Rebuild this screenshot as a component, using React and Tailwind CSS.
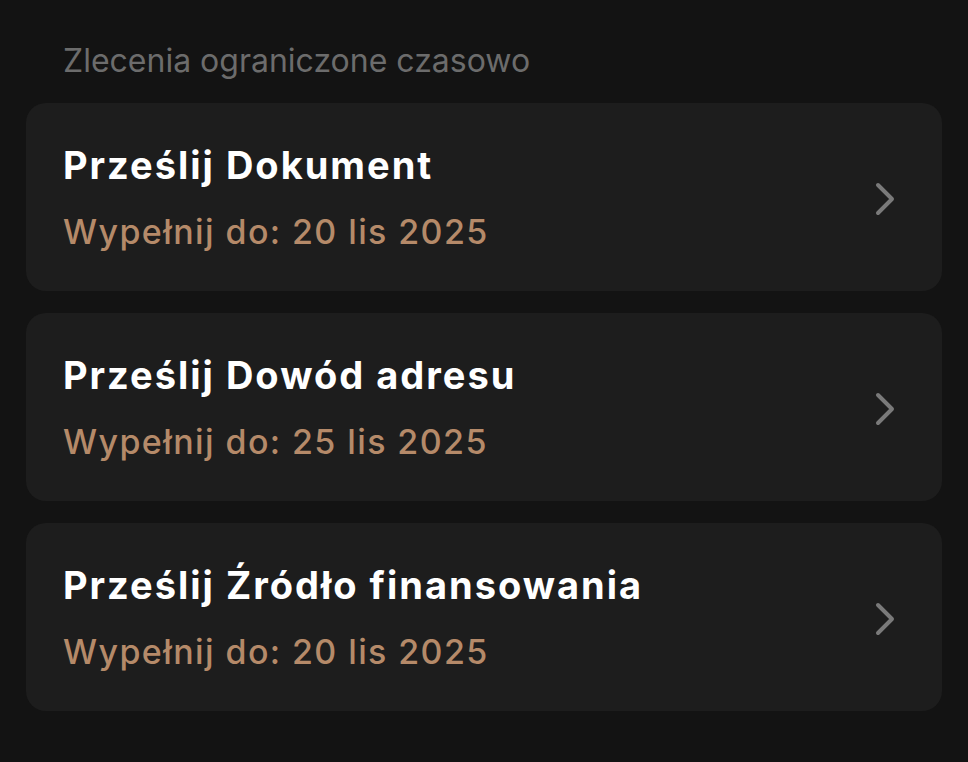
const tasks = [
  { title: 'Prześlij Dokument', due: '20 lis 2025' },
  { title: 'Prześlij Dowód adresu', due: '25 lis 2025' },
  { title: 'Prześlij Źródło finansowania', due: '20 lis 2025' },
];

function Chevron() {
  return (
    <svg width="24" height="40" viewBox="0 0 24 40" fill="none" className="mt-[4px] shrink-0">
      <path d="M5 6 L19 20 L5 34" stroke="#7a7a7a" strokeWidth="4" strokeLinecap="round" strokeLinejoin="round" />
    </svg>
  );
}

export default function App() {
  return (
    <div
      className="min-h-screen bg-[#131313] px-[26px] pt-[41px]"
      style={{ fontFamily: 'Inter, "Noto Sans", sans-serif' }}
    >
      <h2 className="px-[37px] text-[32px] leading-[39px] text-[#6c6c6c] mb-[23px]">
        Zlecenia ograniczone czasowo
      </h2>
      <div className="flex flex-col gap-[22px]">
        {tasks.map((task) => (
          <div
            key={task.title}
            className="flex h-[188px] items-center justify-between rounded-[20px] bg-[#1d1d1d] pl-[37px] pr-[45px]"
          >
            <div className="flex flex-col">
              <div className="text-[38px] font-bold leading-[46px] tracking-[2px] text-white">
                {task.title}
              </div>
              <div className="mt-[23px] text-[34px] font-medium leading-[41px] tracking-[1.4px] text-[#b58a69]">
                Wypełnij do: {task.due}
              </div>
            </div>
            <Chevron />
          </div>
        ))}
      </div>
    </div>
  );
}
